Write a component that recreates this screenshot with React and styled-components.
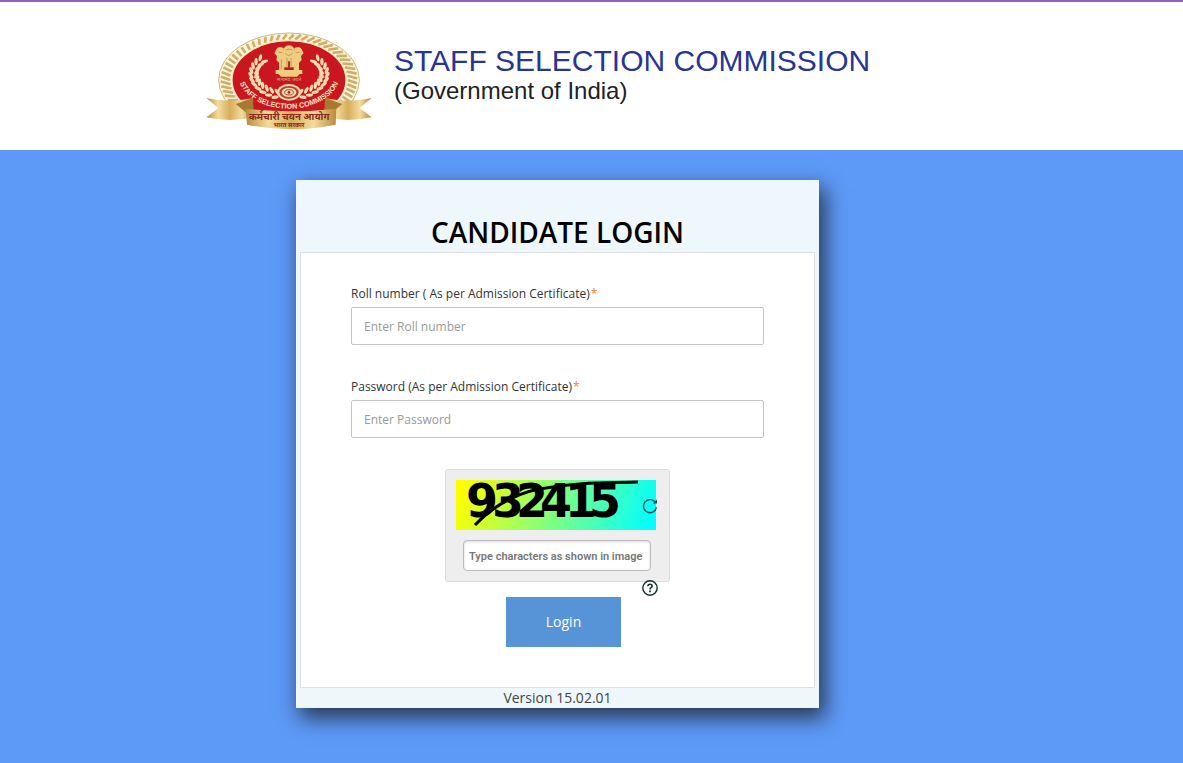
import React, { useState } from 'react';
import styled, { createGlobalStyle } from 'styled-components';

const GlobalStyle = createGlobalStyle`
  * {
    box-sizing: border-box;
  }

  body {
    margin: 0;
    background: #5d9af8;
    font-family: 'Open Sans', 'Noto Sans', sans-serif;
    color: #333;
  }
`;

const Header = styled.header`
  display: flex;
  align-items: flex-start;
  gap: 20px;
  min-height: 150px;
  padding: 27px 20px 0 204px;
  border-top: 2px solid #8e62b8;
  background: #fff;
`;

const Brand = styled.div`
  padding-top: 15px;
  font-family: 'Liberation Sans', Arial, sans-serif;
`;

const BrandName = styled.div`
  font-size: 30px;
  line-height: 34px;
  color: #2a3590;
`;

const BrandSub = styled.div`
  font-size: 24px;
  line-height: 26px;
  color: #222;
`;

const Main = styled.main`
  display: flex;
  justify-content: center;
  padding: 30px 68px 55px 0;
`;

const Card = styled.section`
  width: 100%;
  max-width: 523px;
  padding: 0 4px;
  background: #eef8fc;
  box-shadow: 5px 9px 20px 1px rgba(30, 30, 40, 0.8);
`;

const Title = styled.h1`
  margin: 0;
  padding: 33px 0 1px;
  font-size: 28px;
  font-weight: 600;
  line-height: 38px;
  text-align: center;
  color: #000;
`;

const Panel = styled.form`
  padding: 32px 50px 40px;
  border: 1px solid #dde1e5;
  background: #fff;
`;

const Fields = styled.div`
  display: grid;
  gap: 33px;
  padding-bottom: 31px;
`;

const Field = styled.div`
  display: flex;
  flex-direction: column;
  gap: 4px;
`;

const Label = styled.label`
  font-size: 12px;
  line-height: 18px;
  color: #333;
`;

const Required = styled.span`
  margin-left: 1px;
  color: #f0803c;
`;

const Input = styled.input`
  width: 100%;
  height: 38px;
  padding: 0 12px;
  border: 1px solid #c4c4c4;
  border-radius: 2px;
  font-family: inherit;
  font-size: 12px;
  color: #333;

  &::placeholder {
    color: #999;
  }
`;

const Captcha = styled.div`
  position: relative;
  display: flex;
  flex-direction: column;
  gap: 10px;
  width: 225px;
  margin: 0 auto;
  padding: 10px;
  border: 1px solid #dcdcdc;
  border-radius: 3px;
  background: #eee;
`;

const CaptchaImage = styled.svg`
  display: block;
  width: 200px;
  height: 50px;
  overflow: visible;
  background: linear-gradient(110deg, #ff0 3%, #0ff 97%);
`;

const CaptchaInput = styled.input`
  width: 188px;
  height: 31px;
  margin-left: 7px;
  padding: 2px 5px 0;
  border: 1px solid #bbb;
  border-radius: 4px;
  box-shadow: inset 0 1px 3px rgba(0, 0, 0, 0.15);
  font-family: Roboto, 'Liberation Sans', sans-serif;
  font-size: 11px;
  font-weight: 600;

  &::placeholder {
    color: #777;
  }
`;

const IconButton = styled.button`
  position: absolute;
  right: 11px;
  top: ${(props) => props.$top};
  width: 16px;
  height: 16px;
  padding: 0;
  border: 0;
  background: none;
  cursor: pointer;

  svg {
    display: block;
  }
`;

const Actions = styled.div`
  display: flex;
  justify-content: center;
  padding: 15px 0 0 12px;
`;

const LoginButton = styled.button`
  width: 115px;
  height: 50px;
  padding: 0 0 2px;
  border: 0;
  background: #5694d7;
  font-family: inherit;
  font-size: 14px;
  font-weight: 500;
  color: #fff;
  cursor: pointer;
`;

const Version = styled.footer`
  font-size: 14px;
  line-height: 20px;
  text-align: center;
  color: #444;
`;

const RAYS = Array.from({ length: 60 }, (_, i) => (i * Math.PI) / 30);
const LEAVES = Array.from({ length: 11 }, (_, i) => i);

// one side of the wreath, mirrored for the other
function Branch() {
  return (
    <g fill="#f4dcae">
      {LEAVES.map((i) => {
        const a = ((112 + i * 11) * Math.PI) / 180;
        const x = 268 + 106 * Math.cos(a);
        const y = 148 + 66 * Math.sin(a);
        const turn = (a * 180) / Math.PI + 90;
        return (
          <g key={i} transform={`translate(${x} ${y}) rotate(${turn})`}>
            <ellipse cx="3" cy="-8" rx="11" ry="5" transform="rotate(-30)" />
            <ellipse cx="3" cy="8" rx="11" ry="5" transform="rotate(30)" />
          </g>
        );
      })}
    </g>
  );
}

function Emblem() {
  return (
    <svg width="170" height="104" viewBox="13 13 510 312" role="img" aria-label="Staff Selection Commission">
      <defs>
        <linearGradient id="gold" x1="0" x2="1">
          <stop offset="0" stopColor="#b98a3c" />
          <stop offset="0.25" stopColor="#f3dc9c" />
          <stop offset="0.5" stopColor="#d7ad5c" />
          <stop offset="0.75" stopColor="#f3dc9c" />
          <stop offset="1" stopColor="#b98a3c" />
        </linearGradient>
        <path id="ring" d="M 116 150 A 152 102 0 0 0 420 150" />
      </defs>
      <ellipse cx="268" cy="166" rx="211" ry="141" fill="#fbf4df" stroke="#d3b873" strokeWidth="3" />
      {RAYS.map((a) => (
        <line
          key={a}
          x1={268 + 176 * Math.cos(a)}
          y1={166 + 122 * Math.sin(a)}
          x2={268 + 205 * Math.cos(a + 0.07)}
          y2={166 + 137 * Math.sin(a + 0.07)}
          stroke="#cdb068"
          strokeWidth="8"
        />
      ))}
      <ellipse cx="268" cy="166" rx="171" ry="118" fill="#c9161f" stroke="#f6e3b0" strokeWidth="4" />
      <Branch />
      <g transform="translate(536 0) scale(-1 1)">
        <Branch />
      </g>

      {/* lion capital */}
      <g fill="#edcd80">
        <path d="M250 82 Q252 63 268 62 Q284 63 286 82 L284 128 H252 Z" />
        <path d="M252 70 Q236 62 230 74 L224 86 L232 94 L230 106 L238 114 L238 138 H254 Z" />
        <path d="M284 70 Q300 62 306 74 L312 86 L304 94 L306 106 L298 114 L298 138 H282 Z" />
        <path d="M228 136 H308 V148 H228 Z M236 148 H300 L292 156 H244 Z" />
      </g>
      <path
        d="M258 76 Q268 70 278 76 M257 86 Q268 98 279 86 M262 100 V130 M274 100 V130 M236 82 L248 84 M300 82 L288 84 M245 104 V132"
        fill="none"
        stroke="#b87a3a"
        strokeWidth="2"
      />
      <path d="M268 112 V128" stroke="#9a3a22" strokeWidth="6" strokeLinecap="round" />
      <text x="268" y="170" textAnchor="middle" fontSize="15" fill="#e8a070" fontFamily="'Noto Sans', 'Noto Sans Devanagari', sans-serif">
        सत्यमेव जयते
      </text>

      <ellipse cx="268" cy="203" rx="36" ry="25" fill="#f2d9ac" />
      <ellipse cx="268" cy="203" rx="29" ry="19" fill="#b83a2c" />
      <ellipse cx="268" cy="203" rx="22" ry="14" fill="#f2d9ac" />
      <ellipse cx="268" cy="203" rx="13" ry="8" fill="none" stroke="#a04830" strokeWidth="3" />
      <circle cx="268" cy="203" r="4" fill="#8a3020" />

      <text fontSize="22" fontWeight="bold" fill="#fbe3c0" fontFamily="'Liberation Sans', Arial, sans-serif">
        <textPath href="#ring" startOffset="50%" textAnchor="middle">
          STAFF SELECTION COMMISSION
        </textPath>
      </text>

      {/* ribbon */}
      <path d="M20 220 Q90 236 160 220 L162 278 Q90 294 20 278 L56 250 Z" fill="url(#gold)" />
      <path d="M516 220 Q446 236 376 220 L374 278 Q446 294 516 278 L480 250 Z" fill="url(#gold)" />
      <path d="M108 238 L160 220 V260 L140 264 Z M428 238 L376 220 V260 L396 264 Z" fill="#a87a31" />
      <path d="M138 252 Q268 268 410 252 L408 300 Q268 328 142 300 Z" fill="url(#gold)" />
      <text
        x="268"
        y="286"
        textAnchor="middle"
        fontSize="29"
        fontWeight="bold"
        fill="#8a2a18"
        fontFamily="'Noto Sans', 'Noto Sans Devanagari', sans-serif"
      >
        कर्मचारी चयन आयोग
        <tspan x="268" y="306" fontSize="18">
          भारत सरकार
        </tspan>
      </text>
    </svg>
  );
}

// left edge of each digit, they run into one another
const DIGIT_X = [10, 36, 60, 84, 109, 133];

function CaptchaCode({ code }) {
  return (
    <CaptchaImage viewBox="0 0 200 50" role="img" aria-label="Captcha">
      <text x={DIGIT_X.join(' ')} y="37" fontFamily="'DejaVu Sans', sans-serif" fontSize="46" fontWeight="bold">
        {code}
      </text>
      <path d="M19 45 C42 20 72 10 90 8 C122 2 150 3 182 2" fill="none" stroke="#000" strokeWidth="3" />
    </CaptchaImage>
  );
}

function App() {
  const [roll, setRoll] = useState('');
  const [password, setPassword] = useState('');
  const [captcha, setCaptcha] = useState('');

  const handleSubmit = (e) => {
    e.preventDefault();
  };

  return (
    <>
      <GlobalStyle />
      <Header>
        <Emblem />
        <Brand>
          <BrandName>STAFF SELECTION COMMISSION</BrandName>
          <BrandSub>(Government of India)</BrandSub>
        </Brand>
      </Header>
      <Main>
        <Card>
          <Title>CANDIDATE LOGIN</Title>
          <Panel onSubmit={handleSubmit}>
            <Fields>
              <Field>
                <Label htmlFor="roll">
                  Roll number ( As per Admission Certificate)<Required>*</Required>
                </Label>
                <Input id="roll" placeholder="Enter Roll number" value={roll} onChange={(e) => setRoll(e.target.value)} />
              </Field>
              <Field>
                <Label htmlFor="password">
                  Password (As per Admission Certificate)<Required>*</Required>
                </Label>
                <Input
                  id="password"
                  type="password"
                  placeholder="Enter Password"
                  value={password}
                  onChange={(e) => setPassword(e.target.value)}
                />
              </Field>
            </Fields>
            <Captcha>
              <CaptchaCode code="932415" />
              <CaptchaInput
                aria-label="Captcha characters"
                placeholder="Type characters as shown in image"
                value={captcha}
                onChange={(e) => setCaptcha(e.target.value)}
              />
              <IconButton type="button" $top="28px" aria-label="Refresh captcha">
                <svg width="16" height="16" viewBox="0 0 16 16">
                  <path d="M14.4 9.4 A6.5 6.5 0 1 1 12.8 3.8" fill="none" stroke="#164a5c" strokeWidth="1.3" />
                  <path d="M15 1.6 V5.6 H11 Z" fill="#164a5c" />
                </svg>
              </IconButton>
              <IconButton type="button" $top="110px" aria-label="Help">
                <svg width="16" height="16" viewBox="0 0 16 16" fill="none" stroke="#162c30" strokeWidth="1.4">
                  <circle cx="8" cy="8" r="7.2" />
                  <path d="M5.9 6.2 Q6 4.3 8 4.3 Q10.1 4.3 10.1 6.1 Q10.1 7.2 8.9 7.8 Q8 8.2 8 9.4" strokeWidth="1.6" />
                  <path d="M8 10.6 V12.2" strokeWidth="1.7" />
                </svg>
              </IconButton>
            </Captcha>
            <Actions>
              <LoginButton type="submit">Login</LoginButton>
            </Actions>
          </Panel>
          <Version>Version 15.02.01</Version>
        </Card>
      </Main>
    </>
  );
}

export default App;
